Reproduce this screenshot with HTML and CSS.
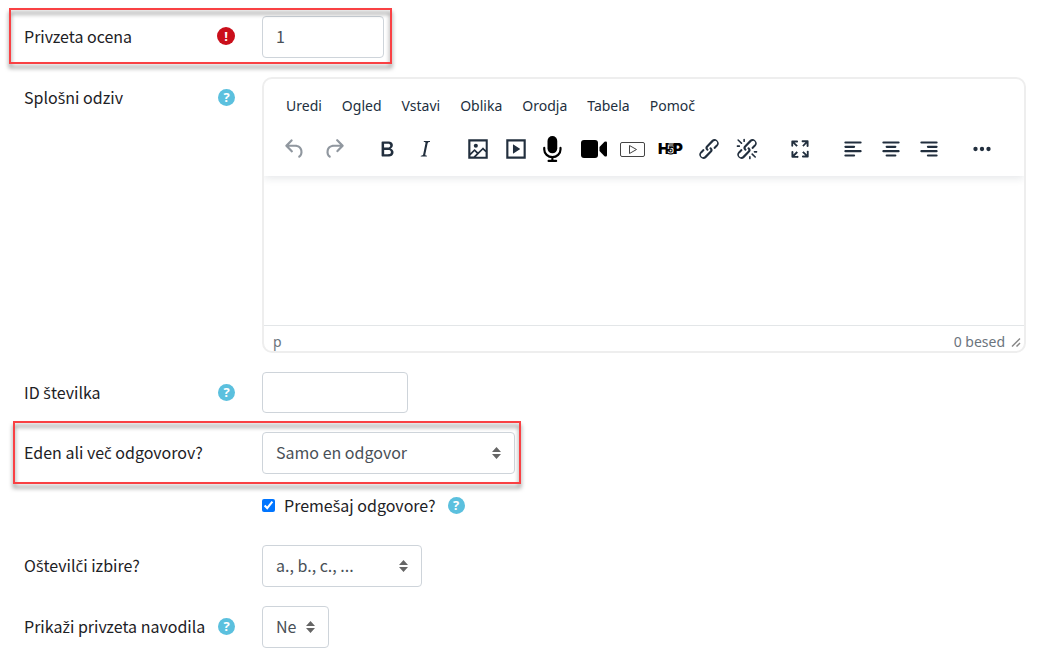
FILE: index.html
```html
<!DOCTYPE html>
<html lang="sl">
<head>
  <meta charset="UTF-8" />
  <meta name="viewport" content="width=device-width, initial-scale=1.0" />
  <title>Vprašanje</title>
  <link rel="stylesheet" href="styles.css">
</head>
<body>
  <form class="question-form">
    <div class="row marked marked-grade">
      <div class="row-label">
        <label for="grade">Privzeta ocena</label>
        <button type="button" class="help required" aria-label="Obvezno">!</button>
      </div>
      <input id="grade" class="field w-small" type="text" value="1">
    </div>

    <div class="row">
      <div class="row-label">
        <label for="feedback">Splo<span class="caron">š</span>ni odziv</label>
        <button type="button" class="help" aria-label="Pomoč">?</button>
      </div>
      <div class="editor">
        <div class="editor-header">
          <div class="menubar">
            <button type="button">Uredi</button>
            <button type="button">Ogled</button>
            <button type="button">Vstavi</button>
            <button type="button">Oblika</button>
            <button type="button">Orodja</button>
            <button type="button">Tabela</button>
            <button type="button">Pomoč</button>
          </div>
          <div class="toolbar">
            <div class="group history">
              <button type="button" aria-label="Razveljavi" disabled><svg viewBox="0 0 24 24"><path d="M6.4 8H12c3.7 0 6.2 2 6.8 5.1.6 2.7-.4 5.6-2.3 6.8a1 1 0 01-1-1.8c1.1-.6 1.8-2.7 1.4-4.6-.5-2.1-2.1-3.5-4.9-3.5H6.4l3.3 3.3a1 1 0 11-1.4 1.4l-5-5a1 1 0 010-1.4l5-5a1 1 0 011.4 1.4L6.4 8z"/></svg></button>
              <button type="button" aria-label="Uveljavi" disabled><svg viewBox="0 0 24 24"><path d="M17.6 10H12c-2.8 0-4.4 1.4-4.9 3.5-.4 2 .3 4 1.4 4.6a1 1 0 11-1 1.8c-2-1.2-2.9-4.1-2.3-6.8.6-3 3-5.1 6.8-5.1h5.6l-3.3-3.3a1 1 0 111.4-1.4l5 5a1 1 0 010 1.4l-5 5a1 1 0 01-1.4-1.4l3.3-3.3z"/></svg></button>
            </div>
            <div class="group">
              <button type="button" aria-label="Krepko"><svg viewBox="0 0 24 24"><path fill-rule="evenodd" d="M7.8 19c-.3 0-.5 0-.6-.2l-.2-.5V5.7c0-.2 0-.4.2-.5l.6-.2h5c1.5 0 2.7.3 3.5 1 .7.6 1.1 1.4 1.1 2.5a3 3 0 01-.6 1.9c-.4.6-1 1-1.6 1.2.4.1.9.3 1.3.6s.8.7 1 1.2c.4.4.5 1 .5 1.6 0 1.3-.4 2.3-1.3 3-.8.7-2.1 1-3.8 1H7.8zm5-8.3c.6 0 1.2-.1 1.6-.5.4-.3.6-.7.6-1.3 0-1.1-.8-1.7-2.3-1.7H9.3v3.5h3.4zm.5 6c.7 0 1.3-.1 1.7-.4.4-.4.6-.9.6-1.5s-.2-1-.7-1.4c-.4-.3-1-.4-2-.4H9.4v3.8h4z"/></svg></button>
              <button type="button" aria-label="Ležeče"><svg viewBox="0 0 24 24"><path d="M16.7 4.7l-.1.9h-.3c-.6 0-1 0-1.4.3-.3.3-.4.6-.5 1.1l-2.1 9.8v.6c0 .5.4.8 1.4.8h.2l-.2.8H8l.2-.8h.2c1.1 0 1.8-.5 2-1.5l2-9.8.1-.5c0-.6-.4-.8-1.4-.8h-.3l.2-.9h5.8z"/></svg></button>
            </div>
            <div class="group">
              <button type="button" aria-label="Slika"><svg viewBox="0 0 24 24"><path fill-rule="evenodd" d="M5 15.7l3.3-3.2c.3-.3.7-.3 1 0L12 15l4.1-4c.3-.4.8-.4 1 0l2 1.9V5H5v10.7zM5 18V19h3l2.8-2.9-2-2L5 17.9zm14-3l-2.5-2.4-6.4 6.5H19v-4zM3 3h18v18H3z"/><circle cx="10" cy="9" r="1.9"/></svg></button>
              <button type="button" aria-label="Predstavnost"><svg viewBox="0 0 24 24"><path fill-rule="evenodd" d="M3 3h18v18H3zM5 5v14h14V5zM9.2 7.6v8.8l6.8-4.4z"/></svg></button>
              <button type="button" class="black" aria-label="Posnemi zvok"><svg viewBox="0 0 24 24"><rect x="6" y="0" width="9" height="16" rx="4.5"/><path fill="none" stroke="currentColor" stroke-width="2" stroke-linecap="round" d="M3 11v1.500a7.500 7 0 0015 0V11M10.500 19.500V23M7 23h7"/></svg></button>
              <button type="button" class="black camera" aria-label="Posnemi video"><svg viewBox="0 0 26 26"><rect x="0" y="4" width="17" height="18" rx="3"/><path d="M18.500 11l5-5.200q2.500-1 2.500 1v12.400q0 2-2.500 1l-5-5.200z"/></svg></button>
              <button type="button" aria-label="Videoposnetek"><svg viewBox="0 0 26 26"><g fill="none" stroke="#444"><rect x="0.5" y="6.500" width="24" height="14" rx="1.500"/><path d="M9.500 9.500v8l7-4z"/></g></svg></button>
              <button type="button" class="black h5p" aria-label="H5P"><svg viewBox="0 0 26 26"><text x="0" y="18">H<tspan class="five" dx="-3">5</tspan><tspan dx="-2">P</tspan></text></svg></button>
              <button type="button" aria-label="Povezava"><svg viewBox="0 0 24 24"><path d="M6.2 12.3a1 1 0 011.4 1.4l-2 2a2 2 0 102.6 2.8l4.8-4.8a1 1 0 000-1.4 1 1 0 111.4-1.3 2.9 2.9 0 010 4L9.6 20a3.9 3.9 0 01-5.500-5.500l2-2zm11.6-.6a1 1 0 01-1.4-1.4l2-2a2 2 0 10-2.6-2.8L11 10.3a1 1 0 000 1.4A1 1 0 119.6 13a2.9 2.9 0 010-4L14.4 4a3.9 3.9 0 015.500 5.500l-2 2z"/></svg></button>
              <button type="button" aria-label="Odstrani povezavo"><svg viewBox="0 0 24 24"><path d="M6.2 12.3a1 1 0 011.4 1.4l-2 2a2 2 0 102.6 2.8l4.8-4.8a1 1 0 000-1.4 1 1 0 111.4-1.3 2.9 2.9 0 010 4L9.6 20a3.9 3.9 0 01-5.500-5.500l2-2zm11.6-.6a1 1 0 01-1.4-1.4l2-2a2 2 0 10-2.6-2.8L11 10.3a1 1 0 000 1.4A1 1 0 119.6 13a2.9 2.9 0 010-4L14.4 4a3.9 3.9 0 015.500 5.500l-2 2zM7.6 6.3a.8.8 0 01-1 1.1L3.3 4.2a.7.7 0 111-1l3.2 3.1zM5.1 8.6a.8.8 0 010 1.500H3a.8.8 0 010-1.500h2zm5-3.500a.8.8 0 01-1.500 0V3a.8.8 0 011.500 0v2zm6 11.8a.8.8 0 011-1l3.200 3.200a.8.8 0 01-1 1L16 17zm-2.200 2a.8.8 0 011.500 0V21a.8.8 0 01-1.500 0v-2zm5-3.500a.7.7 0 110-1.500H21a.8.8 0 010 1.500h-2z"/></svg></button>
            </div>
            <div class="group">
              <button type="button" aria-label="Celozaslonsko"><svg viewBox="0 0 24 24"><path d="M15.3 10l-1.200-1.300 2.900-3h-2.300a.9.9 0 110-1.700H19c.5 0 .9.4.9.9v4.400a.9.9 0 11-1.800 0V7l-2.900 3zm0 4l3 3v-2.300a.9.9 0 111.700 0V19c0 .5-.4.9-.9.9h-4.400a.9.9 0 110-1.800H17l-3-2.900 1.300-1.200zM10 15.400l-2.900 3h2.300a.9.9 0 110 1.700H5a.9.9 0 01-.9-.9v-4.400a.9.9 0 111.800 0V17l2.900-3 1.200 1.300zM8.700 10L5.700 7v2.300a.9.9 0 01-1.700 0V5c0-.5.4-.9.9-.9h4.400a.9.9 0 010 1.800H7l3 2.900-1.300 1.200z"/></svg></button>
            </div>
            <div class="group">
              <button type="button" aria-label="Levo"><svg viewBox="0 0 24 24"><path class="lines" d="M5 6h14M5 10h8M5 14h14M5 18h8"/></svg></button>
              <button type="button" aria-label="Na sredino"><svg viewBox="0 0 24 24"><path class="lines" d="M5 6h14M8 10h8M5 14h14M8 18h8"/></svg></button>
              <button type="button" aria-label="Desno"><svg viewBox="0 0 24 24"><path class="lines" d="M5 6h14M11 10h8M5 14h14M11 18h8"/></svg></button>
            </div>
            <div class="group">
              <button type="button" aria-label="Več"><svg viewBox="0 0 24 24"><circle cx="6" cy="12" r="2"/><circle cx="12" cy="12" r="2"/><circle cx="18" cy="12" r="2"/></svg></button>
            </div>
          </div>
        </div>
        <textarea id="feedback" class="editor-body"></textarea>
        <div class="statusbar">
          <span>p</span>
          <span class="wordcount">0 besed</span>
          <svg class="resize" viewBox="0 0 10 10"><path d="M1 9.500l8-8M5.500 9.500L9 6"/></svg>
        </div>
      </div>
    </div>

    <div class="row">
      <div class="row-label">
        <label for="idnumber">ID <span class="caron">š</span>tevilka</label>
        <button type="button" class="help" aria-label="Pomoč">?</button>
      </div>
      <input id="idnumber" class="field w-id" type="text">
    </div>

    <div class="row marked marked-answers">
      <div class="row-label">
        <label for="single">Eden ali ve<span class="caron">č</span> odgovorov?</label>
      </div>
      <select id="single" class="field w-large">
        <option>Samo en odgovor</option>
        <option>Dovoljenih je več odgovorov</option>
      </select>
    </div>

    <div class="row row-check">
      <div class="check">
        <input id="shuffle" type="checkbox" checked>
        <label for="shuffle">Preme<span class="caron">š</span>aj odgovore?</label>
        <button type="button" class="help" aria-label="Pomoč">?</button>
      </div>
    </div>

    <div class="row">
      <div class="row-label">
        <label for="numbering">O<span class="caron">š</span>tevil<span class="caron">č</span>i izbire?</label>
      </div>
      <select id="numbering" class="field w-medium">
        <option>a., b., c., ...</option>
        <option>1., 2., 3., ...</option>
      </select>
    </div>

    <div class="row">
      <div class="row-label">
        <label for="instructions">Prika<span class="caron">ž</span>i privzeta navodila</label>
        <button type="button" class="help" aria-label="Pomoč">?</button>
      </div>
      <select id="instructions" class="field w-tiny">
        <option>Ne</option>
        <option>Da</option>
      </select>
    </div>
  </form>
</body>
</html>
```
FILE: styles.css
```css
* { box-sizing: border-box; }
body { margin: 0; background: #fff; color: #1d2125; font-family: "Noto Sans CJK JP", "Noto Sans", sans-serif; font-size: 16px; line-height: 24px; }
button { font: inherit; color: inherit; background: none; border: none; padding: 0; cursor: pointer; }

.caron { font-family: "Open Sans", sans-serif; }

.question-form { display: flex; flex-direction: column; gap: 19px; padding: 16px 20px 12px 24px; }
.row { display: grid; grid-template-columns: 211px minmax(0, 1fr); column-gap: 27px; align-items: start; position: relative; }
.row-label { display: flex; align-items: center; justify-content: space-between; height: 41px; padding-bottom: 1px; white-space: nowrap; }

.help { display: flex; align-items: center; justify-content: center; flex: none; width: 17px; height: 17px; border-radius: 50%; background: #5bc0de; color: #fff; font: bold 13px/17px "Open Sans", sans-serif; }
.required { background: #ca0f1b; width: 18px; height: 18px; }

/* red frames round the important settings */
.marked { width: fit-content; }
.marked::after { content: ""; position: absolute; border: 2px solid #f94144; filter: drop-shadow(0 4px 2px rgba(0,0,0,0.5)); pointer-events: none; }
.marked-grade::after { inset: -8px -8px -6px -15px; }
.marked-answers::after { inset: -11px -6px -10px -11px; }

.field { height: 42px; border: 1px solid #ced4da; border-radius: 4px; padding: 0 13px 2px; background: #fff; color: #495057; font: inherit; }
select.field { appearance: none; background: #fff url("data:image/svg+xml,%3Csvg xmlns='http://www.w3.org/2000/svg' viewBox='0 0 9 12'%3E%3Cpath fill='%23666' d='M0 5l4.500-5L9 5zM0 7h9l-4.500 5z'/%3E%3C/svg%3E") no-repeat right 13px center / 9px 12px; padding-right: 24px; }
.w-tiny { width: 67px; }
.w-small { width: 122px; }
.w-id { width: 146px; height: 41px; }
.w-medium { width: 160px; }
.w-large { width: 253px; }

.row-check .check { grid-column: 2; display: flex; align-items: center; height: 33px; padding-bottom: 9px; }
.check input { width: 13px; height: 13px; margin: 0 9px 0 0; accent-color: #0075ff; }
.check .help { margin-left: 12px; }

.editor { border: 2px solid #eee; border-radius: 10px; overflow: hidden; color: #222f3e; font-family: "Noto Sans", sans-serif; }
.editor-header { position: relative; padding: 10px 11px 8px; box-shadow: 0 2px 8px rgba(34,47,62,0.12); }
.menubar { display: flex; gap: 20px; padding: 0 11px; font-size: 14px; line-height: 34px; }
.toolbar { display: flex; gap: 15px; padding-top: 7px; }
.group { display: flex; }
.group button { display: flex; align-items: center; justify-content: center; width: 38px; height: 38px; }
.history button { width: 39px; color: #90979f; }
.group .camera { width: 41px; }
.group .black { color: #000; }
.group svg { display: block; width: 26px; height: 26px; fill: currentColor; }
.lines { stroke: currentColor; stroke-width: 2; stroke-linecap: round; }
.h5p text { font: 900 15px Inter, sans-serif; }
.h5p .five { font-size: 13px; fill: #fff; stroke: #000; stroke-width: 1; }
.editor-body { display: block; width: 100%; height: 149px; border: none; resize: none; outline: none; padding: 12px; font: inherit; }
.statusbar { display: flex; align-items: center; height: 26px; border-top: 1px solid #e3e6e8; padding: 6px 3px 0 9px; font-size: 14px; color: #6b747d; }
.wordcount { margin-left: auto; }
.resize { width: 10px; height: 10px; margin-left: 6px; fill: none; stroke: #888; stroke-width: 1.5; }
```
